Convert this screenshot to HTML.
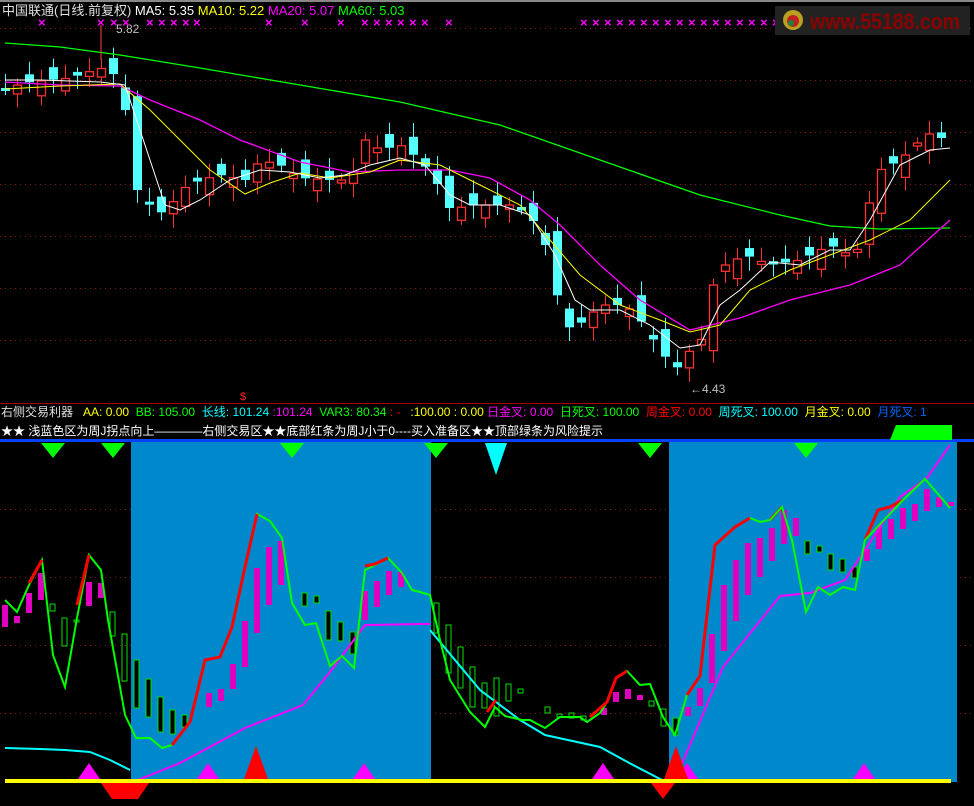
<!DOCTYPE html>
<html><head><meta charset="utf-8"><style>
body{margin:0;background:#000;width:974px;height:806px;overflow:hidden;font-family:"Liberation Sans","Noto Sans CJK SC",sans-serif}
svg{position:absolute;left:0;top:0}
.t{position:absolute;font-size:12px;white-space:nowrap;line-height:14px}
</style></head><body>
<svg id="s" width="974" height="806" xmlns="http://www.w3.org/2000/svg">
<rect x="0" y="0" width="974" height="2" fill="#888"/>
<g stroke="#8b1a1a" stroke-dasharray="1,4" stroke-width="1">
<line x1="0" y1="28.5" x2="974" y2="28.5"/><line x1="0" y1="80.5" x2="974" y2="80.5"/><line x1="0" y1="132.5" x2="974" y2="132.5"/><line x1="0" y1="184.5" x2="974" y2="184.5"/><line x1="0" y1="236.5" x2="974" y2="236.5"/><line x1="0" y1="288.5" x2="974" y2="288.5"/><line x1="0" y1="340.5" x2="974" y2="340.5"/>
<line x1="0" y1="509.5" x2="974" y2="509.5"/><line x1="0" y1="577.5" x2="974" y2="577.5"/><line x1="0" y1="645.5" x2="974" y2="645.5"/><line x1="0" y1="713.5" x2="974" y2="713.5"/>
</g>
<g id="cand"></g>
<polyline fill="none" stroke="#00ff00" stroke-width="1.3" points="5,43 60,47 120,55 200,68 300,85 400,102 500,125 600,160 700,195 780,215 830,226 880,229 950,228"/>
<polyline fill="none" stroke="#ff00ff" stroke-width="1.3" points="5,82 60,85 120,86 150,100 200,120 240,140 300,162 350,172 400,170 450,170 490,178 530,200 560,225 600,265 640,300 690,330 740,318 790,300 850,285 900,265 950,220"/>
<polyline fill="none" stroke="#ffff00" stroke-width="1" points="5,89 60,86 120,84 150,110 180,140 210,170 245,194 270,183 300,173 330,178 370,172 400,160 440,165 480,185 520,205 550,240 580,275 620,305 660,320 690,332 720,325 750,290 790,270 830,255 870,240 910,220 950,180"/>
<polyline fill="none" stroke="#ffffff" stroke-width="1" points="5,80 40,80 100,82 125,85 150,160 165,205 180,210 200,200 230,180 260,170 290,172 320,178 345,175 370,165 400,158 425,165 450,195 470,205 500,205 530,215 555,255 575,300 590,310 620,310 650,325 680,348 700,345 720,305 740,290 770,262 800,265 830,250 850,250 870,220 900,165 930,150 950,148"/>
<text x="116" y="33" fill="#c0c0c0" font-size="12" font-family="Liberation Sans">5.82</text>
<line x1="101" y1="25" x2="101" y2="60" stroke="#ff4040"/>
<text x="690" y="393" fill="#c0c0c0" font-size="12" font-family="Liberation Sans">←4.43</text>
<g fill="#ff00ff" font-size="13" font-weight="bold" font-family="Liberation Sans" id="xs"></g>
<rect x="775" y="6" width="195" height="29" fill="#222"/>
<circle cx="793" cy="20" r="10" fill="#b8a020"/><circle cx="793" cy="21" r="6" fill="#c02020"/><circle cx="791" cy="23" r="3" fill="#208040"/>
<text x="810" y="29" fill="#8b0000" font-size="22" font-weight="bold" font-family="Liberation Sans" textLength="150" lengthAdjust="spacingAndGlyphs">www.55188.com</text>
<line x1="0" y1="403.5" x2="974" y2="403.5" stroke="#a00" />
<text x="240" y="400" fill="#ff2020" font-size="11" font-family="Liberation Sans">$</text>
<rect x="0" y="439" width="974" height="3" fill="#0040ff"/>
<polygon points="896,425 952,425 952,440 890,440" fill="#00ff00"/>
<rect x="131" y="442" width="300" height="340" fill="#0088cc"/>
<rect x="669" y="442" width="288" height="340" fill="#0088cc"/>
<g fill="#00ff00"><polygon points="41,443 65,443 53,458"/><polygon points="101,443 125,443 113,458"/><polygon points="280,443 304,443 292,458"/><polygon points="424,443 448,443 436,458"/><polygon points="638,443 662,443 650,458"/><polygon points="794,443 818,443 806,458"/></g>
<polygon points="485,443 507,443 496,475" fill="#00ffff"/>
<g id="bars"></g>
<polyline fill="none" stroke="#00ffff" stroke-width="2" points="5,748 40,749 65,750 90,752 110,760 130,770"/>
<polyline fill="none" stroke="#00ffff" stroke-width="2" points="430,630 480,690 520,720 545,735 600,747 633,765 662,780"/>
<polyline fill="none" stroke="#ff00ff" stroke-width="2" points="138,780 180,763 245,728 303,705 330,672 365,625 420,624 430,624"/>
<polyline fill="none" stroke="#ff00ff" stroke-width="2" points="675,780 723,667 780,596 810,593 845,580 900,497 927,478 950,445"/>
<polyline fill="none" stroke="#00ff00" stroke-width="2" points="5,600 17,612 29,585 42,560 53,655 65,687 77,618 89,555 101,570 108,620 125,715 136,738 150,738 162,748 172,745 190,722 205,660 220,657 232,627 245,567 257,514 270,521 282,538 292,603 305,625 316,623 330,666 342,656 354,668 365,570 375,565 388,558 402,573 412,590 420,592 430,595 440,640 450,680 470,712 485,727 495,707 505,716 522,720 530,720 545,728 560,717 580,717 587,722 600,713 607,702 616,678 627,671 640,685 650,684 663,717 675,735 687,695"/>
<g fill="none" stroke="#ff0000" stroke-width="3">
<polyline points="29,583 42,560"/><polyline points="77,605 89,555"/>
<polyline points="172,745 190,722 205,660 220,657 232,627 245,567 257,514"/>
<polyline points="365,566 375,564 388,558"/>
<polyline points="487,712 496,700"/>
<polyline points="590,717 607,702 616,678 627,671"/>
<polyline points="687,695 700,676 715,545 735,527 750,518"/>
<polyline points="770,520 782,507"/>
<polyline points="865,540 878,510 890,507 903,500"/>
</g>
<polyline fill="none" stroke="#00ff00" stroke-width="2" points="750,518 760,522 770,520 782,507 792,540 806,612 818,587 830,595 843,587 855,590 865,540 903,500 925,479 950,508"/>
<rect x="5" y="779" width="946" height="4" fill="#ffff00"/>
<g fill="#ff00ff"><polygon points="78,779 100,779 89,763"/><polygon points="197,779 219,779 208,763"/><polygon points="353,779 375,779 364,763"/><polygon points="592,779 614,779 603,763"/><polygon points="676,779 698,779 687,763"/><polygon points="853,779 875,779 864,763"/></g>
<g fill="#ff0000"><polygon points="244,779 268,779 256,746"/><polygon points="664,779 688,779 676,746"/><polygon points="101,783 149,783 138,799 112,799"/><polygon points="651,783 675,783 663,799"/></g>
</svg>
<div class="t" style="left:2px;top:4px;color:#e0e0e0;font-size:13px">中国联通(日线.前复权) <span style="color:#fff">MA5: 5.35</span> <span style="color:#ff0">MA10: 5.22</span> <span style="color:#f0f">MA20: 5.07</span> <span style="color:#0f0">MA60: 5.03</span></div>
<div class="t" style="left:1px;top:405px;color:#e0e0e0">右侧交易利器 &nbsp;&nbsp;<span style="color:#ff0">AA: 0.00</span> &nbsp;<span style="color:#0f0">BB: 105.00</span> &nbsp;<span style="color:#0ff">长线: 101.24</span> <span style="color:#f0f">:101.24</span> &nbsp;<span style="color:#0f0">VAR3: 80.34</span> <span style="color:#f00">: -</span> &nbsp;&nbsp;<span style="color:#ff0">:100.00 : 0.00</span> <span style="color:#f0f">日金叉: 0.00</span> &nbsp;<span style="color:#0f0">日死叉: 100.00</span> &nbsp;<span style="color:#f00">周金叉: 0.00</span> &nbsp;<span style="color:#0ff">周死叉: 100.00</span> &nbsp;<span style="color:#ff0">月金叉: 0.00</span> &nbsp;<span style="color:#06f">月死叉: 1</span></div>
<div class="t" style="left:1px;top:424px;color:#fff">★★ 浅蓝色区为周J拐点向上————右侧交易区★★底部红条为周J小于0----买入准备区★★顶部绿条为风险提示</div>
<script>
var kp=[[5,88],[30,82],[70,78],[100,68],[115,75],[125,110],[137,190],[150,205],[165,215],[180,190],[200,180],[220,175],[245,180],[260,160],[280,165],[300,178],[330,180],[350,180],[365,140],[380,150],[400,145],[420,160],[435,180],[450,210],[470,205],[490,205],[510,205],[530,215],[545,245],[555,290],[570,330],[585,320],[600,305],[625,305],[640,320],[660,350],[675,370],[690,350],[700,345],[710,290],[725,265],[745,255],[770,265],[800,260],[830,245],[855,258],[865,215],[880,170],[900,160],[920,140],[935,130],[950,150]];
function f(x){for(var i=1;i<kp.length;i++){if(x<=kp[i][0]){var a=kp[i-1],b=kp[i];return a[1]+(b[1]-a[1])*(x-a[0])/(b[0]-a[0]);}}return 150;}
var g=document.getElementById('cand'),h='',prev=88;
for(var x=5,i=0;x<=950;x+=12,i++){var c=f(x),r=Math.sin(i*2.7)*14,o=prev+r,cl=c;var t=Math.min(o,cl),b=Math.max(o,cl);if(b-t<3)b=t+3;var up=cl<o;var hi=t-4-Math.abs(Math.cos(i*1.3))*10,lo=b+4+Math.abs(Math.sin(i*1.9))*10;
var col=up?'#ff3030':'#54ffff';h+='<line x1="'+(x+0.5)+'" y1="'+hi+'" x2="'+(x+0.5)+'" y2="'+lo+'" stroke="'+col+'"/>';
h+=up?'<rect x="'+(x-3.5)+'" y="'+t+'" width="8" height="'+(b-t)+'" fill="#000" stroke="'+col+'" stroke-width="1.3"/>':'<rect x="'+(x-4)+'" y="'+t+'" width="9" height="'+(b-t)+'" fill="'+col+'"/>';prev=cl;}
g.innerHTML=h;
var xs=[42,101,114,126,150,162,174,186,197,269,305,341,365,377,389,401,413,425,449,584,596,608,620,632,644,656,668,680,692,704,716,728,740,752,764,776,788,800,812,824,836,848,860,872,884,896,908,920,932,944];
var s='';xs.forEach(function(x){s+='<text x="'+(x-4)+'" y="27">×</text>';});document.getElementById('xs').innerHTML=s;
var bars=[[5,17,605,627,'m'],[17,17,616,623,'m'],[29,17,593,613,'m'],[41,17,573,600,'m'],[53,17,604,611,'g'],[65,17,618,646,'g'],[77,17,620,622,'g'],[89,17,582,606,'m'],[101,17,583,598,'m'],[113,17,612,636,'g'],[125,17,634,681,'g'],[137,17,660,708,'b'],[149,17,679,717,'b'],[161,17,697,732,'b'],[173,17,710,734,'b'],[185,17,715,727,'b'],[209,17,693,707,'m'],[221,17,689,701,'m'],[233,17,664,689,'m'],[245,17,621,667,'m'],[257,17,568,633,'m'],[269,17,547,605,'m'],[281,17,541,585,'m'],[305,17,593,606,'b'],[317,17,596,603,'b'],[329,17,611,640,'b'],[341,17,622,641,'b'],[353,17,632,654,'b'],[365,17,591,620,'m'],[377,17,581,607,'m'],[389,17,571,595,'m'],[401,17,572,587,'m'],[437,17,603,633,'g'],[449,17,625,673,'g'],[461,17,647,688,'g'],[473,17,667,707,'g'],[485,17,683,708,'g'],[497,17,678,716,'g'],[509,17,684,701,'g'],[521,17,689,693,'g'],[548,17,707,713,'g'],[560,17,714,717,'g'],[572,17,713,718,'g'],[584,17,716,720,'g'],[604,17,708,715,'m'],[616,17,692,702,'m'],[628,17,689,699,'m'],[640,17,695,700,'m'],[652,17,701,706,'g'],[664,17,709,726,'g'],[676,17,718,735,'b'],[688,17,707,716,'m'],[700,17,688,706,'m'],[712,17,634,683,'m'],[724,17,585,651,'m'],[736,17,560,621,'m'],[748,17,543,595,'m'],[760,17,538,577,'m'],[772,17,528,561,'m'],[784,17,510,544,'m'],[796,17,518,536,'m'],[808,17,541,554,'b'],[820,17,546,552,'b'],[831,17,554,570,'b'],[843,17,559,572,'b'],[855,17,567,578,'b'],[867,17,549,561,'m'],[879,17,526,549,'m'],[891,17,519,539,'m'],[903,17,508,529,'m'],[915,17,504,521,'m'],[927,17,489,511,'m'],[939,17,497,507,'m'],[951,17,502,506,'m']];
var bh='';bars.forEach(function(b){var x=b[0]-3,y=b[2],hh=b[3]-b[2];if(b[4]=='m')bh+='<rect x="'+x+'" y="'+y+'" width="6" height="'+hh+'" fill="#e000c0"/>';else if(b[4]=='g')bh+='<rect x="'+x+'" y="'+y+'" width="5" height="'+hh+'" fill="none" stroke="#00e000" stroke-width="1"/>';else bh+='<rect x="'+x+'" y="'+y+'" width="5" height="'+hh+'" fill="#000" stroke="#00e000" stroke-width="1"/>';});
document.getElementById('bars').innerHTML=bh;
</script>
</body></html>
